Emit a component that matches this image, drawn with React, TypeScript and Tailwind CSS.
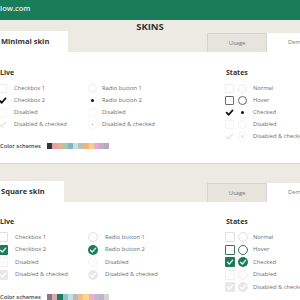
import React from 'react'

const GREEN = '#1a7d5a'

type State = 'normal' | 'hover' | 'checked' | 'disabled' | 'disabledChecked'

function CheckMark({ color, width = 1.6 }: { color: string; width?: number }) {
  return (
    <svg viewBox="0 0 10 10" className="w-full h-full">
      <path d="M1.8 5.2 L4.1 7.5 L8.4 2.6" fill="none" stroke={color} strokeWidth={width} strokeLinecap="round" strokeLinejoin="round" />
    </svg>
  )
}

function MinimalBox({ state }: { state: State }) {
  if (state === 'checked')
    return (
      <div className="w-[9px] h-[9px]">
        <CheckMark color="#111" width={2} />
      </div>
    )
  if (state === 'disabledChecked')
    return (
      <div className="w-[9px] h-[9px]">
        <CheckMark color="#e6e6e6" width={1.6} />
      </div>
    )
  const border = state === 'hover' ? 'border-[#6a6a6a]' : state === 'disabled' ? 'border-[#f3f3f3]' : 'border-[#ededed]'
  return <div className={`w-[9px] h-[9px] border ${border} rounded-[1px]`} />
}

function MinimalRadio({ state }: { state: State }) {
  if (state === 'checked')
    return (
      <div className="w-[9px] h-[9px] flex items-center justify-center">
        <div className="w-[3px] h-[3px] rounded-full bg-[#111]" />
      </div>
    )
  if (state === 'disabledChecked')
    return (
      <div className="w-[9px] h-[9px] flex items-center justify-center rounded-full border border-[#f4f4f4]">
        <div className="w-[3px] h-[3px] rounded-full bg-[#e6e6e6]" />
      </div>
    )
  const border = state === 'hover' ? 'border-[#6a6a6a]' : state === 'disabled' ? 'border-[#f3f3f3]' : 'border-[#ededed]'
  return <div className={`w-[9px] h-[9px] border ${border} rounded-full`} />
}

function SquareBox({ state, round }: { state: State; round?: boolean }) {
  const shape = round ? 'rounded-full' : 'rounded-[1px]'
  if (state === 'checked')
    return (
      <div className={`w-[10px] h-[10px] ${shape} p-[1px]`} style={{ backgroundColor: GREEN }}>
        <CheckMark color="#fff" width={1.5} />
      </div>
    )
  if (state === 'disabledChecked')
    return (
      <div className={`w-[10px] h-[10px] ${shape} p-[1px] bg-[#e8e8e8]`}>
        <CheckMark color="#fff" width={1.5} />
      </div>
    )
  const border = state === 'hover' ? 'border-[#3f6f5e]' : state === 'disabled' ? 'border-[#f2f2f2] bg-[#fcfcfc]' : 'border-[#e0e0e0]'
  return <div className={`w-[10px] h-[10px] border ${border} ${shape}`} />
}

const LIVE: { state: State; cb: string; rb: string }[] = [
  { state: 'normal', cb: 'Checkbox 1', rb: 'Radio button 1' },
  { state: 'checked', cb: 'Checkbox 2', rb: 'Radio button 2' },
  { state: 'disabled', cb: 'Disabled', rb: 'Disabled' },
  { state: 'disabledChecked', cb: 'Disabled & checked', rb: 'Disabled & checked' },
]

const STATES: { state: State; label: string }[] = [
  { state: 'normal', label: 'Normal' },
  { state: 'hover', label: 'Hover' },
  { state: 'checked', label: 'Checked' },
  { state: 'disabled', label: 'Disabled' },
  { state: 'disabledChecked', label: 'Disabled & checked' },
]

const MINIMAL_COLORS = ['#333333', '#e3a39b', '#dcb49c', '#a3cd9e', '#7db8c5', '#c8dce6', '#bdbdbd', '#f4b482', '#f5d57c', '#eea8c8', '#c2acd2', '#b4abb8']
const SQUARE_COLORS = ['#7e7e7e', '#dfa7b2', '#1a7d5a', '#8fc4c8', '#c9dde8', '#bababa', '#f2bf8b', '#f5da88', '#ebb0ca', '#c6b4d3', '#bdb3c4', '#d8d0d8']

function TabBar({ title, top, width }: { title: string; top: number; width: number }) {
  return (
    <div className="flex items-end h-[21px]" style={{ marginTop: top }}>
      <div className="h-[21px] bg-white flex items-center pl-[1px] text-[7.5px] font-bold text-[#333]" style={{ width }}>
        {title}
      </div>
      <div className="flex-1" />
      <div className="w-[60px] h-[19px] bg-[#e7e4dd] border border-b-0 border-[#d6d3cc] flex items-center justify-center text-[5.8px] text-[#777]">
        Usage
      </div>
      <div className="w-[33px] h-[19px] bg-white flex items-center pl-[21px] text-[5.8px] text-[#777] whitespace-nowrap overflow-hidden">
        Demo
      </div>
    </div>
  )
}

function SkinBody({ square, rowH, pt, colors }: { square?: boolean; rowH: number; pt: number; colors: string[] }) {
  const labelCls = 'text-[5.8px] text-[#6d6d6d] whitespace-nowrap'
  return (
    <div className="flex" style={{ paddingTop: pt }}>
      <div className="w-[225px] shrink-0">
        <div className="h-[10px] leading-[10px] text-[7px] font-bold text-[#333]">Live</div>
        <div className="mt-[4px] flex">
          <div className="w-[88px] -ml-[2px]">
            {LIVE.map((r) => (
              <div key={r.cb} className="flex items-center" style={{ height: rowH }}>
                <div className={square ? 'w-[17px]' : 'w-[16px]'}>
                  {square ? <SquareBox state={r.state} /> : <MinimalBox state={r.state} />}
                </div>
                <span className={labelCls}>{r.cb}</span>
              </div>
            ))}
          </div>
          <div className="flex-1 ml-[2px]">
            {LIVE.map((r) => (
              <div key={r.rb} className="flex items-center" style={{ height: rowH }}>
                <div className={square ? 'w-[17px]' : 'w-[14px]'}>
                  {square ? <SquareBox state={r.state} round /> : <MinimalRadio state={r.state} />}
                </div>
                <span className={labelCls}>{r.rb}</span>
              </div>
            ))}
          </div>
        </div>
        <div className="mt-[11px] flex items-center h-[10px]">
          <span className="w-[47px] text-[5.8px] font-semibold text-[#444]">Color schemes</span>
          <div className="flex">
            {colors.map((c, i) => (
              <div key={i} className="w-[5.2px] h-[6px]" style={{ backgroundColor: c }} />
            ))}
          </div>
        </div>
      </div>
      <div className="flex-1">
        <div className="h-[10px] leading-[10px] text-[7px] font-bold text-[#333] pl-[1px]">States</div>
        <div className="mt-[4px]">
          {STATES.map((r) => (
            <div key={r.label} className="flex items-center" style={{ height: rowH }}>
              <div className="w-[13px] flex">
                {square ? <SquareBox state={r.state} /> : <MinimalBox state={r.state} />}
              </div>
              <div className="w-[15px] flex">
                {square ? <SquareBox state={r.state} round /> : <MinimalRadio state={r.state} />}
              </div>
              <span className={labelCls}>{r.label}</span>
            </div>
          ))}
        </div>
      </div>
    </div>
  )
}

export default function App() {
  return (
    <div className="w-[300px] h-[300px] overflow-hidden bg-white" style={{ fontFamily: '"Open Sans", "Liberation Sans", sans-serif' }}>
      <div className="h-[20px] flex items-start pt-[3px]" style={{ backgroundColor: GREEN }}>
        <span className="-ml-[2px] text-[7.5px] leading-[11px] font-semibold text-[#e8f2ee]">llow.com</span>
      </div>
      <div className="bg-[#edeae4] h-[32px] flex flex-col">
        <div className="h-[11px] pt-[2px] leading-[10px] text-center text-[9.5px] font-bold text-[#333]">SKINS</div>
        <TabBar title="Minimal skin" top={0} width={68} />
      </div>
      <SkinBody rowH={12} pt={16} colors={MINIMAL_COLORS} />
      <div className="mt-[12px] border-t border-[#dcdad5] bg-[#edeae4] h-[39px] flex flex-col">
        <TabBar title="Square skin" top={17} width={64} />
      </div>
      <SkinBody square rowH={12.5} pt={15} colors={SQUARE_COLORS} />
    </div>
  )
}
